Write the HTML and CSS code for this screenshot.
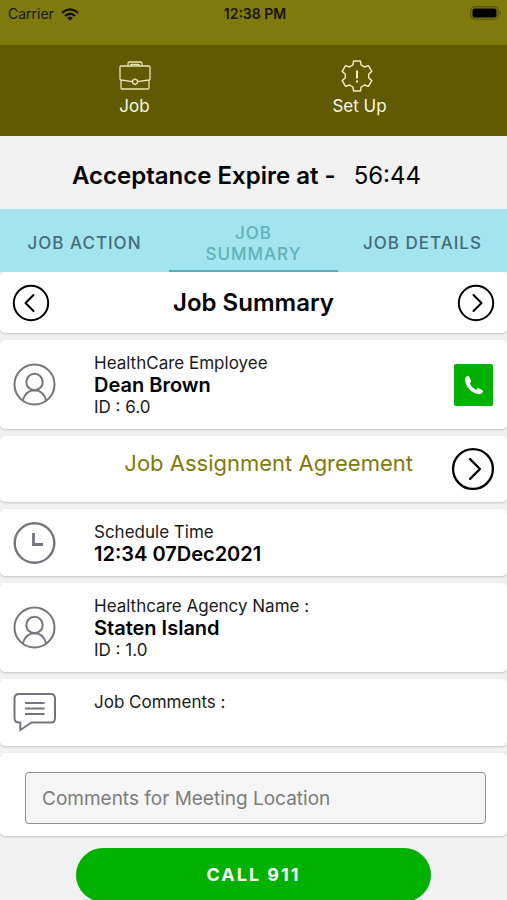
FILE: index.html
```html
<!DOCTYPE html>
<html lang="en">
<head>
<meta charset="utf-8">
<meta name="viewport" content="width=device-width, initial-scale=1">
<title>Job Summary</title>
<link rel="stylesheet" href="styles.css">
</head>
<body>
<header>
  <div class="status">
    <span class="carrier">Carrier
      <svg width="18" height="13" viewBox="0 0 18 13" aria-hidden="true"><g fill="none" stroke="#111100" stroke-width="2.3"><path d="M1 4.8Q9-2 17 4.8"/><path d="M4 8Q9 3.6 14 8"/></g><path d="M6.2 10Q9 7.7 11.8 10L9 12.8Z" fill="#111100"/></svg>
    </span>
    <span class="clock">12:38 PM</span>
    <svg class="battery" width="32" height="14" viewBox="0 0 32 14" aria-hidden="true"><rect x=".8" y=".8" width="27.4" height="12.4" rx="3.6" fill="none" stroke="#4f4b05"/><rect x="2.5" y="2.5" width="24" height="9" rx="2" fill="#000"/><path d="M29.6 4.8Q32 7 29.6 9.2Z" fill="#4f4b05"/></svg>
  </div>
  <nav class="topnav">
    <a href="#job">
      <svg width="32" height="30" viewBox="0 0 32 30" fill="none" stroke="#e9e4b8" stroke-width="1.3" stroke-linejoin="round" aria-hidden="true"><path d="M9 6V3.6Q9 2 10.6 2H21.4Q23 2 23 3.6V6M12 6V4.4H20V6"/><path d="M13.6 21.6L2 20Q1 19.8 1 19V7Q1 6 2 6H30Q31 6 31 7V19Q31 19.8 30 20L18.4 21.6"/><path d="M2 20V28Q2 29 3 29H29Q30 29 30 28V20"/><path d="M16 19L18.4 20.4V23L16 24.6L13.6 23V20.4Z"/></svg>
      Job
    </a>
    <a href="#setup" class="setup">
      <svg width="32" height="32" viewBox="0 0 32 32" fill="none" stroke="#f1edc9" stroke-width="1.4" stroke-linejoin="round" aria-hidden="true"><path d="M12.6 1H19.4L20.2 5.2Q22 5.9 23.4 7L27.4 5.6L30.8 11.4L27.6 14.2Q27.9 16 27.6 17.8L30.8 20.6L27.4 26.4L23.4 25Q22 26.1 20.2 26.8L19.4 31H12.6L11.8 26.8Q10 26.1 8.6 25L4.6 26.4L1.2 20.6L4.4 17.8Q4.1 16 4.4 14.2L1.2 11.4L4.6 5.6L8.6 7Q10 5.9 11.8 5.2Z"/><path d="M16 10.5V18.5M16 20.5V22.5" stroke-width="2"/></svg>
      Set Up
    </a>
  </nav>
</header>
<main>
  <p class="timer"><strong>Acceptance Expire at -</strong><time>56:44</time></p>
  <div class="tabs" role="tablist">
    <button type="button" role="tab" aria-selected="false">JOB ACTION</button>
    <button type="button" role="tab" aria-selected="true">JOB SUMMARY</button>
    <button type="button" role="tab" aria-selected="false">JOB DETAILS</button>
  </div>
  <div class="cards">
    <section class="card heading">
      <button type="button" class="round" aria-label="Previous"><svg width="38" height="38" viewBox="0 0 38 38"><circle cx="19" cy="19" r="17.2"/><path d="M21.5 11L13.5 19L21.5 27"/></svg></button>
      <h1>Job Summary</h1>
      <button type="button" class="round" aria-label="Next"><svg width="38" height="38" viewBox="0 0 38 38"><circle cx="19" cy="19" r="17.2"/><path d="M16.5 11L24.5 19L16.5 27"/></svg></button>
    </section>
    <section class="card">
      <svg class="icon" width="44" height="44" viewBox="0 0 44 44" aria-hidden="true"><circle cx="21.5" cy="21.5" r="20"/><circle cx="21.5" cy="19" r="8.2"/><path d="M9.7 37.5Q12.7 27.2 21.5 27.2T33.3 37.5"/></svg>
      <div class="info"><p>HealthCare Employee</p><h2>Dean Brown</h2><p>ID : 6.0</p></div>
      <button type="button" class="phone" aria-label="Call employee"><svg width="20" height="20" viewBox="0 0 20 20"><path d="M3.2 1Q1 2.2 1 4.8C1.5 12 8 19 15.5 19.2Q18 19 19 16.8Q19.4 15.9 18.4 15.3L14.8 13.2Q13.9 12.8 13.3 13.5L12.1 14.9Q7.6 12.9 5.6 8.5L6.9 7.2Q7.5 6.5 7.1 5.7L5.2 1.8Q4.5.5 3.2 1Z" fill="#fff"/></svg></button>
    </section>
    <section class="card agreement">
      <a href="#agreement">Job Assignment Agreement</a>
      <button type="button" class="round" aria-label="Open agreement"><svg width="44" height="44" viewBox="0 0 38 38"><circle cx="19" cy="19" r="17.2"/><path d="M16.5 10.5L25 19L16.5 27.5"/></svg></button>
    </section>
    <section class="card">
      <svg class="icon" width="44" height="44" viewBox="0 0 44 44" aria-hidden="true"><circle cx="21.5" cy="22" r="19.8" stroke-width="2.4"/><path d="M20.5 12V23.5H30" stroke-width="2.8"/></svg>
      <div class="info"><p>Schedule Time</p><h2>12:34 07Dec2021</h2></div>
    </section>
    <section class="card">
      <svg class="icon" width="44" height="44" viewBox="0 0 44 44" aria-hidden="true"><circle cx="21.5" cy="21.5" r="20"/><circle cx="21.5" cy="19" r="8.2"/><path d="M9.7 37.5Q12.7 27.2 21.5 27.2T33.3 37.5"/></svg>
      <div class="info"><p>Healthcare Agency Name :</p><h2>Staten Island</h2><p>ID : 1.0</p></div>
    </section>
    <section class="card comments">
      <svg class="icon" width="44" height="42" viewBox="0 0 44 42" aria-hidden="true"><path d="M6 3H38Q42 3 42 7.5V27Q42 31.5 38 31.5H18.5L7.3 39V31.5H6Q1.5 31.5 1.5 27V7.5Q1.5 3 6 3Z"/><path d="M12 12H31.5M12 17.5H31.5M12 23H31.5"/></svg>
      <div class="info"><p>Job Comments :</p></div>
    </section>
    <section class="card location">
      <input type="text" aria-label="Comments for Meeting Location" placeholder="Comments for Meeting Location">
    </section>
  </div>
  <button type="button" class="call">CALL 911</button>
</main>
</body>
</html>
```
FILE: styles.css
```css
* { box-sizing: border-box; }
body {
  margin: 0;
  background: #f1f1f1;
  color: #000;
  font-family: Inter, "Liberation Sans", sans-serif;
  font-size: 17px;
  line-height: 22px;
}
h1, h2, p { margin: 0; }
button, input { font: inherit; margin: 0; }
button { border: 0; padding: 0; color: inherit; background: none; cursor: pointer; }
svg { display: block; flex: none; }

.status {
  display: grid;
  grid-template-columns: 1fr auto 1fr;
  align-items: start;
  height: 45px;
  padding: 6px 5px 0 8px;
  background: #807a0c;
  color: #161500;
  font-size: 14px;
  line-height: 16px;
}
.carrier { display: flex; align-items: center; gap: 7px; }
.clock { font-weight: 600; }
.battery { justify-self: end; }

.topnav {
  display: grid;
  grid-template-columns: 1fr 1fr;
  height: 91px;
  padding: 15px 35px 0 22px;
  background: #605b00;
}
.topnav a {
  display: flex;
  flex-direction: column;
  align-items: center;
  justify-content: space-between;
  height: 57px;
  color: #f8f5e6;
  text-decoration: none;
}
.topnav .setup svg { margin-right: 6px; }

.timer {
  display: flex;
  justify-content: center;
  gap: 18px;
  padding: 26px 14px 19px 0;
  font-size: 24px;
  line-height: 28px;
}
.timer strong { font-weight: 600; }

.tabs {
  display: grid;
  grid-template-columns: repeat(3, minmax(0, 1fr));
  height: 63px;
  background: #a3e5ed;
}
.tabs button {
  padding: 8px 24px 0;
  border-bottom: 2px solid transparent;
  color: #466b77;
  font-weight: 500;
  line-height: 21px;
  letter-spacing: 1px;
}
.tabs [aria-selected="true"] {
  border-color: #58aeb5;
  color: #62b1b7;
}

.cards { display: grid; gap: 7px; }
.card {
  display: flex;
  align-items: center;
  padding: 12px 14px 11px 13px;
  border-radius: 5px;
  background: #fff;
  box-shadow: 0 1px 2px #c4c4c4;
}
.heading { justify-content: space-between; padding: 12px 12px 11px; }
.heading h1 { font-size: 24px; font-weight: 600; line-height: 28px; }
.round svg { fill: none; stroke: #000; stroke-width: 2; stroke-linecap: round; stroke-linejoin: round; }
.icon { fill: none; stroke: #74747f; stroke-width: 2; }
.info { flex: 1; margin-left: 37px; color: #1a1a1a; }
.info h2 { color: #000; font-size: 20px; font-weight: 600; line-height: 22px; }
.phone {
  display: grid;
  place-items: center;
  width: 39px;
  height: 42px;
  border-radius: 2px;
  background: #00b200;
}
.agreement { padding: 11px 12px 11px 13px; }
.agreement a {
  flex: 1;
  margin-bottom: 12px;
  padding-right: 38px;
  color: #807a0c;
  font-size: 22px;
  line-height: 28px;
  text-align: right;
  text-decoration: none;
}
.comments { align-items: flex-start; padding-bottom: 13px; }
.location { padding: 19px 21px 12px 25px; }
.location input {
  width: 100%;
  height: 52px;
  padding: 0 16px;
  border: 1px solid #8e8e8e;
  border-radius: 4px;
  background: #f5f5f5;
  font-size: 19px;
}
.location input::placeholder { color: #7c7c7c; opacity: 1; }

.call {
  display: block;
  width: 70%;
  height: 54px;
  margin: 12px auto 0;
  border-radius: 27px;
  background: #00b200;
  color: #fff;
  font-size: 18px;
  font-weight: 700;
  letter-spacing: 2px;
}
```
